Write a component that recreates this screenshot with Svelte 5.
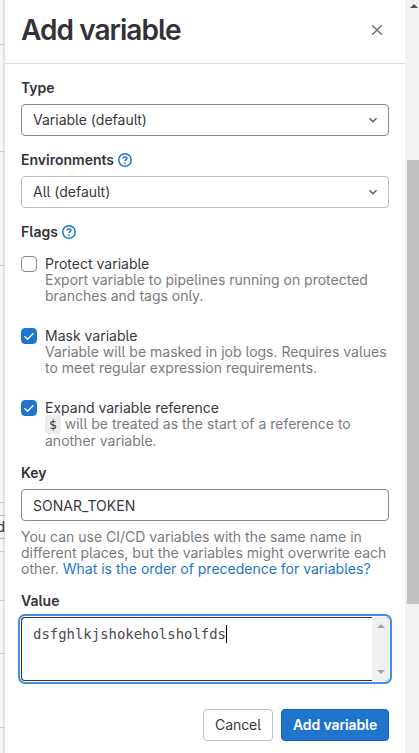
<script lang="ts">
	interface Flag {
		id: string;
		label: string;
		checked: boolean;
		code?: string;
		lines: string[];
	}

	let flags = $state<Flag[]>([
		{
			id: 'protected',
			label: 'Protect variable',
			checked: false,
			lines: ['Export variable to pipelines running on protected', 'branches and tags only.']
		},
		{
			id: 'masked',
			label: 'Mask variable',
			checked: true,
			lines: ['Variable will be masked in job logs. Requires values', 'to meet regular expression requirements.']
		},
		{
			id: 'expanded',
			label: 'Expand variable reference',
			checked: true,
			code: '$',
			lines: ['will be treated as the start of a reference to', 'another variable.']
		}
	]);

	let key = $state('SONAR_TOKEN');
	let value = 'dsfghlkjshokeholsholfds';

	// Row heights of the table that shows behind the drawer
	const rowsAbove = [45, 107, 114, 237];
	const rowsBelow = [13, 49, 53, 74];
</script>

{#snippet chevron()}
	<svg class="chevron" width="16" height="16" viewBox="0 0 16 16">
		<path d="M4.5 6.2 8 9.7l3.5-3.5" />
	</svg>
{/snippet}

{#snippet help()}
	<svg class="help" width="14" height="14" viewBox="0 0 14 14">
		<circle cx="7" cy="7" r="6.25" />
		<path d="M5 5.6C5.1 4.5 5.9 3.9 7 3.9s1.9.6 1.9 1.6c0 1.3-1.9 1.2-1.9 2.5" />
		<circle class="dot" cx="7" cy="10.1" r=".95" />
	</svg>
{/snippet}

<div class="page">
	<div class="backdrop">
		{#each rowsAbove as height}
			<div class="row" style="height: {height}px"></div>
		{/each}
		<div class="peek">d</div>
		{#each rowsBelow as height}
			<div class="row" style="height: {height}px"></div>
		{/each}
	</div>

	<aside class="drawer">
		<header>
			<h2>Add variable</h2>
			<button class="close" aria-label="Close drawer">
				<svg width="12" height="12" viewBox="0 0 12 12">
					<path d="M1.2 1.2l9.6 9.6M10.8 1.2l-9.6 9.6" />
				</svg>
			</button>
		</header>

		<form onsubmit={(e) => e.preventDefault()}>
			<div class="group">
				<div class="label">Type</div>
				<button type="button" class="field select strong">Variable (default){@render chevron()}</button>
			</div>

			<div class="group">
				<div class="label">Environments {@render help()}</div>
				<button type="button" class="field select">All (default){@render chevron()}</button>
			</div>

			<div class="group flags">
				<div class="label">Flags {@render help()}</div>
				{#each flags as flag (flag.id)}
					<label class="flag">
						<input type="checkbox" bind:checked={flag.checked} />
						<span class="box" class:checked={flag.checked}>
							{#if flag.checked}
								<svg width="12" height="12" viewBox="0 0 12 12">
									<path d="M1.5 6.3 4.5 9.2l6-6" />
								</svg>
							{/if}
						</span>
						<span class="flag-text">
							<span class="flag-title">{flag.label}</span>
							<span class="hint" class:with-code={flag.code}>{#if flag.code}<code>{flag.code}</code>{' '}{/if}{flag.lines[0]}</span>
							<span class="hint">{flag.lines[1]}</span>
						</span>
					</label>
				{/each}
			</div>

			<div class="group">
				<label class="label" for="key">Key</label>
				<input id="key" class="field strong" bind:value={key} />
				<p class="help-text">
					You can use CI/CD variables with the same name in<br />
					different places, but the variables might overwrite each<br />
					other. <a href="#precedence">What is the order of precedence for variables?</a>
				</p>
			</div>

			<div class="group">
				<div class="label">Value</div>
				<div class="textarea">
					<div class="value">{value}<span class="caret"></span></div>
					<div class="inner-scroll">
						<span class="arrow up"></span>
						<span class="arrow down"></span>
					</div>
				</div>
			</div>

			<footer>
				<button type="button" class="btn cancel">Cancel</button>
				<button type="submit" class="btn confirm">Add variable</button>
			</footer>
		</form>
	</aside>

	<div class="scrollbar">
		<span class="arrow up"></span>
		<div class="thumb"></div>
	</div>
</div>

<style>
	:global(body) {
		margin: 0;
		background: #fff;
	}

	.page {
		display: flex;
		width: 419px;
		height: 753px;
		overflow: hidden;
		font-family: Inter, 'Liberation Sans', sans-serif;
		font-feature-settings: 'cv05';
		font-size: 14px;
		line-height: 16px;
		color: #3a383f;
	}

	.page * {
		box-sizing: border-box;
	}

	button,
	input {
		font: inherit;
		font-feature-settings: inherit;
		color: inherit;
		margin: 0;
	}

	.backdrop {
		width: 5px;
		flex-shrink: 0;
		overflow: hidden;
		background: linear-gradient(to right, #fafafa, #f4f4f4 40%, #dcdcdc);
	}

	.row {
		border-bottom: 1px solid #cfcfd2;
	}

	.peek {
		display: flex;
		justify-content: flex-end;
		height: 24px;
		margin: 12px 0 0;
		border: solid #bfbfc3;
		border-width: 1px 0;
		line-height: 22px;
		color: #333238;
	}

	.drawer {
		width: 400px;
		flex-shrink: 0;
		background: #fff;
	}

	header {
		display: flex;
		justify-content: space-between;
		align-items: center;
		height: 64px;
		padding: 0 22px 4px 16px;
		border-bottom: 1px solid #dcdcde;
	}

	h2 {
		margin: 0;
		font-size: 28px;
		font-weight: 600;
		line-height: 34px;
		letter-spacing: -0.95px;
		color: #333238;
	}

	.close {
		display: flex;
		padding: 0;
		border: none;
		background: transparent;
	}

	.close path {
		stroke: #737278;
		stroke-width: 1.5;
	}

	form {
		padding: 16px;
	}

	.group {
		margin-bottom: 16px;
	}

	.label {
		display: flex;
		align-items: center;
		gap: 4px;
		height: 16px;
		margin-bottom: 8px;
		font-weight: 600;
		color: #333238;
	}

	.help {
		fill: none;
		stroke: #1f75cb;
		stroke-width: 1.5;
	}

	.dot {
		fill: #1f75cb;
		stroke: none;
	}

	.field {
		display: flex;
		align-items: center;
		width: 100%;
		height: 32px;
		padding: 0 11px;
		border: 1px solid #bfbfc3;
		border-radius: 4px;
		background: #fff;
		outline: none;
	}

	.field.strong {
		border-color: #89888d;
	}

	.select {
		justify-content: space-between;
		padding-right: 7px;
	}

	.chevron path {
		fill: none;
		stroke: #626168;
		stroke-width: 1.6;
	}

	.flags .label {
		margin-bottom: 16px;
	}

	.flag {
		display: flex;
		gap: 8px;
		margin-bottom: 24px;
	}

	.flag:last-child {
		margin-bottom: 0;
	}

	.flag input {
		position: absolute;
		opacity: 0;
	}

	.box {
		display: flex;
		align-items: center;
		justify-content: center;
		width: 16px;
		height: 16px;
		flex-shrink: 0;
		border: 1px solid #89888d;
		border-radius: 4px;
	}

	.box.checked {
		border-color: #1f75cb;
		background: #1f75cb;
	}

	.box path {
		fill: none;
		stroke: #fff;
		stroke-width: 1.4;
	}

	.flag-text {
		display: flex;
		flex-direction: column;
		white-space: nowrap;
	}

	.hint,
	.help-text {
		color: #7b7a80;
	}

	.hint.with-code {
		height: 17px;
	}

	code {
		padding: 2px 4px;
		border-radius: 4px;
		background: #ececef;
		font-family: 'DejaVu Sans Mono', monospace;
		font-size: 13px;
		color: #333238;
	}

	.help-text {
		margin: 8px 0 0;
		white-space: nowrap;
	}

	a {
		color: #1f75cb;
		text-decoration: none;
	}

	.textarea {
		display: flex;
		height: 64px;
		border: 1px solid #333238;
		border-right: none;
		border-radius: 4px;
		box-shadow: 0 0 0 1px #fff, 0 0 0 3px #428fdc;
	}

	.value {
		flex: 1;
		padding: 7px 11px;
		font-family: 'DejaVu Sans Mono', monospace;
		font-size: 13.95px;
		line-height: 18px;
		color: #4c4a51;
	}

	.caret {
		display: inline-block;
		width: 1px;
		height: 18px;
		background: #000;
		vertical-align: top;
	}

	.inner-scroll {
		display: flex;
		flex-direction: column;
		justify-content: space-between;
		align-items: center;
		width: 17px;
		margin: -1px 0;
		padding: 7px 0;
		background: #f0f0f0;
		border-radius: 0 4px 4px 0;
	}

	.arrow {
		border: solid transparent;
		border-width: 0 4px;
	}

	.arrow.up {
		border-bottom: 4px solid #a3a3a3;
	}

	.arrow.down {
		border-top: 4px solid #a3a3a3;
	}

	footer {
		display: flex;
		justify-content: flex-end;
		gap: 8px;
		padding-top: 12px;
	}

	.btn {
		height: 32px;
		padding: 0;
		border: 1px solid #bfbfc3;
		border-radius: 4px;
		background: #fff;
		letter-spacing: -0.1px;
	}

	.cancel {
		width: 70px;
	}

	.confirm {
		width: 108px;
		border-color: #1068bf;
		background: #1f75cb;
		font-weight: 600;
		color: #fff;
	}

	.scrollbar {
		width: 14px;
		flex-shrink: 0;
		padding: 4px 0 0 2px;
		background: #f1f1f1;
	}

	.scrollbar .arrow {
		display: block;
		width: 8px;
		margin-left: 3px;
		border-bottom-color: #505050;
	}

	.thumb {
		height: 444px;
		margin-top: 152px;
		background: #c1c1c1;
	}
</style>
